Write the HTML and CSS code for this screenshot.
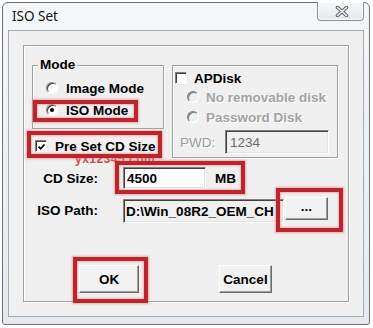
FILE: index.html
```html
<!DOCTYPE html>
<html>
<head>
<meta charset="utf-8">
<title>ISO Set</title>
<link rel="stylesheet" href="styles.css">
</head>
<body>
<div class="window">
  <div class="titlebar">
    <span class="title">ISO Set</span>
    <div class="close">
      <svg width="14" height="11" viewBox="0 0 14 11">
        <path d="M2.5 1.5 L11.5 9.5 M11.5 1.5 L2.5 9.5" stroke="#5d6168" stroke-width="3.6" stroke-linecap="round"/>
        <path d="M2.5 1.5 L11.5 9.5 M11.5 1.5 L2.5 9.5" stroke="#f4f5f7" stroke-width="1.6" stroke-linecap="round"/>
      </svg>
    </div>
  </div>
  <div class="client">
    <div class="frame">
      <div class="top-row">
        <div class="left-col">
          <div class="group mode-group">
            <span class="group-title">Mode</span>
            <div class="opt"><span class="radio"></span><span>Image Mode</span></div>
            <div class="opt"><span class="radio checked"></span><span>ISO Mode</span></div>
          </div>
          <div class="opt preset">
            <span class="check"><svg width="10" height="10" viewBox="0 0 10 10"><polyline points="1.8,4.6 4,7 8.4,2.2" fill="none" stroke="#000" stroke-width="1.9"/></svg></span>
            <span>Pre Set CD Size</span>
          </div>
        </div>
        <div class="group ap-group">
          <div class="opt ap-head"><span class="check"></span><span>APDisk</span></div>
          <div class="opt sub disabled"><span class="radio off"></span><span>No removable disk</span></div>
          <div class="opt sub disabled"><span class="radio off"></span><span>Password Disk</span></div>
          <div class="pwd-row">
            <span class="pwd-label">PWD:</span>
            <span class="field pwd">1234</span>
          </div>
        </div>
      </div>
      <div class="field-row cd-row">
        <span class="label">CD Size:</span>
        <span class="field cd">4500</span>
        <span class="unit">MB</span>
      </div>
      <div class="field-row iso-row">
        <span class="label">ISO Path:</span>
        <span class="field path">D:\Win_08R2_OEM_CH</span>
        <span class="btn browse">...</span>
      </div>
      <div class="btn-row">
        <span class="btn ok">OK</span>
        <span class="btn cancel">Cancel</span>
      </div>
    </div>
  </div>
  <span class="watermark">yx12345.com</span>
  <div class="mark mark-iso"></div>
  <div class="mark mark-preset"></div>
  <div class="mark mark-cd"></div>
  <div class="mark mark-browse"></div>
  <div class="mark mark-ok"></div>
</div>
</body>
</html>
```
FILE: styles.css
```css
* { box-sizing: border-box; }

body {
  margin: 0;
  width: 373px;
  height: 328px;
  overflow: hidden;
  background: #ffffff;
  font-family: "Liberation Sans", Arial, sans-serif;
}

.window {
  position: relative;
  margin: 2px 0 0 2px;
  width: 368px;
  height: 323px;
  border: 1px solid #6c7076;
  border-radius: 6px 6px 3px 3px;
  background: linear-gradient(#f5f7f9, #e6eaee);
  padding: 0 5px 7px 5px;
}

.titlebar {
  display: flex;
  align-items: flex-start;
  height: 27px;
}

.title {
  font-family: "Noto Sans", "Open Sans", sans-serif;
  font-size: 13.5px;
  line-height: 27px;
  color: #111;
  padding-left: 4px;
}

.close {
  margin-left: auto;
  margin-top: -1px;
  width: 47px;
  height: 19px;
  border: 1px solid #8a8f96;
  border-top: none;
  border-radius: 0 0 4px 4px;
  background: linear-gradient(#f7f8fa, #e4e8ec);
  box-shadow: inset 0 0 0 1px rgba(255,255,255,0.8);
  display: flex;
  align-items: center;
  justify-content: center;
  padding-left: 2px;
}

.client {
  height: 287px;
  border: 1px solid #a3a9b0;
  background: #f0f0f0;
  padding: 14px;
}

.frame {
  height: 257px;
  border: 1px solid #a0a0a0;
  box-shadow: inset 1px 1px #fff, 1px 1px #fff;
  padding: 19px 10px 0 8px;
}

.top-row {
  display: flex;
  gap: 8px;
  height: 93px;
}

.left-col { width: 132px; }

.group {
  position: relative;
  border: 1px solid #a0a0a0;
  box-shadow: inset 1px 1px #fff, 1px 1px #fff;
}

.group-title {
  position: absolute;
  top: -9px;
  left: 5px;
  padding: 0 2px;
  background: #f0f0f0;
  font-size: 13.5px;
  font-weight: bold;
  line-height: 16px;
}

.mode-group {
  height: 64px;
  padding: 12px 0 0 13px;
}

.opt {
  display: flex;
  align-items: center;
  gap: 8px;
  height: 20px;
  font-size: 13.5px;
  font-weight: bold;
  color: #000;
}

.mode-group .opt + .opt { margin-top: 2px; }

.radio {
  flex: none;
  position: relative;
  width: 12px;
  height: 12px;
  border-radius: 50%;
  border: 1px solid;
  border-color: #808080 #ffffff #ffffff #808080;
  background: #fff;
  box-shadow: inset 1px 1px 0 #404040;
}

.radio.checked::after {
  content: "";
  position: absolute;
  left: 3px;
  top: 3px;
  width: 4px;
  height: 4px;
  border-radius: 50%;
  background: #000;
}

.radio.off { background: #f0f0f0; box-shadow: inset 1px 1px 0 #7a7a7a; }

.check {
  flex: none;
  width: 12px;
  height: 12px;
  border: 1px solid;
  border-color: #808080 #ffffff #ffffff #808080;
  background: #fff;
  box-shadow: inset 1px 1px 0 #404040;
  display: flex;
  align-items: center;
  justify-content: center;
  padding: 1px 0 0 1px;
}

.preset {
  margin-top: 8px;
  padding-left: 3px;
  height: 18px;
}

.ap-group {
  width: 166px;
  height: 93px;
  padding: 3px 0 0 2px;
}

.ap-group .opt { gap: 7px; }

.ap-head { height: 18px; }

.sub { padding-left: 12px; }

.disabled {
  color: #a3a3a3;
  text-shadow: 1px 1px 0 #fff;
}

.pwd-row {
  display: flex;
  align-items: center;
  height: 24px;
  margin-top: 3px;
}

.pwd-label {
  width: 50px;
  padding-left: 5px;
  font-size: 13.5px;
  color: #9a9a9a;
  text-shadow: 1px 1px 0 #fff;
}

.field {
  display: flex;
  align-items: center;
  border: 1px solid;
  border-color: #808080 #ffffff #ffffff #808080;
  box-shadow: inset 1px 1px 0 #404040, inset -1px -1px 0 #e3e3e3;
  font-size: 13.5px;
  font-weight: bold;
  color: #000;
  white-space: nowrap;
  overflow: hidden;
}

.pwd {
  width: 104px;
  height: 24px;
  background: #f0f0f0;
  padding-left: 4px;
  font-weight: normal;
  color: #6a6a6a;
}

.field-row {
  display: flex;
  align-items: center;
}

.label {
  width: 66px;
  text-align: right;
  font-size: 13.5px;
  font-weight: bold;
  color: #000;
  margin-right: 25px;
}

.cd-row {
  margin-top: 9px;
  height: 22px;
}

.cd {
  width: 83px;
  height: 22px;
  background: #fff;
  padding-left: 3px;
}

.unit {
  margin-left: 9px;
  font-size: 13.5px;
  font-weight: bold;
}

.iso-row {
  margin-top: 8px;
  height: 26px;
  align-items: flex-start;
}

.iso-row .label {
  margin-top: 2px;
  line-height: 24px;
}

.path {
  width: 161px;
  height: 24px;
  margin-top: 2px;
  background: #f0f0f0;
  padding-left: 2px;
}

.btn {
  display: flex;
  align-items: center;
  justify-content: center;
  background: #f2f2f2;
  border: 1px solid;
  border-color: #ffffff #6a6a6a #6a6a6a #ffffff;
  box-shadow: inset -1px -1px 0 #a0a0a0;
  font-size: 13.5px;
  font-weight: bold;
  color: #000;
}

.browse {
  width: 43px;
  height: 23px;
  margin-left: 1px;
  padding-bottom: 4px;
}

.btn-row {
  display: flex;
  margin-top: 42px;
}

.ok {
  width: 60px;
  height: 28px;
  margin-left: 47px;
}

.cancel {
  width: 53px;
  height: 28px;
  margin-left: 80px;
}

.watermark {
  position: absolute;
  left: 72px;
  top: 151px;
  font-size: 12px;
  line-height: 11px;
  font-weight: bold;
  color: rgba(205, 40, 40, 0.85);
  letter-spacing: 0.5px;
}

.mark {
  position: absolute;
  border: 4px solid #b9262d;
  box-shadow: 0 0 2px 1px rgba(235, 120, 120, 0.6), inset 0 0 2px 1px rgba(235, 120, 120, 0.5);
}

.mark-iso { left: 30px; top: 97px; width: 105px; height: 22px; }
.mark-preset { left: 24px; top: 128px; width: 135px; height: 27px; }
.mark-cd { left: 112px; top: 158px; width: 130px; height: 33px; }
.mark-browse { left: 273px; top: 185px; width: 67px; height: 44px; }
.mark-ok { left: 70px; top: 254px; width: 75px; height: 46px; }
```
